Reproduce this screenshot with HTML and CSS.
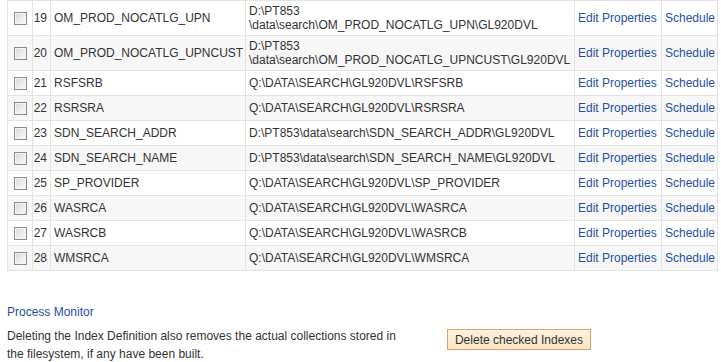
FILE: index.html
```html
<!DOCTYPE html>
<html>
<head>
<meta charset="utf-8">
<link rel="stylesheet" href="styles.css">
</head>
<body>
<table class="grid">
  <colgroup>
    <col class="c-chk"><col class="c-num"><col class="c-name"><col class="c-path"><col class="c-edit"><col class="c-sched">
  </colgroup>
  <tr><td><span class="chk"></span></td><td class="num">19</td><td>OM_PROD_NOCATLG_UPN</td><td>D:\PT853<br>\data\search\OM_PROD_NOCATLG_UPN\GL920DVL</td><td><a href="#">Edit Properties</a></td><td><a href="#">Schedule</a></td></tr>
  <tr class="alt"><td><span class="chk"></span></td><td class="num">20</td><td>OM_PROD_NOCATLG_UPNCUST</td><td>D:\PT853<br>\data\search\OM_PROD_NOCATLG_UPNCUST\GL920DVL</td><td><a href="#">Edit Properties</a></td><td><a href="#">Schedule</a></td></tr>
  <tr><td><span class="chk"></span></td><td class="num">21</td><td>RSFSRB</td><td>Q:\DATA\SEARCH\GL920DVL\RSFSRB</td><td><a href="#">Edit Properties</a></td><td><a href="#">Schedule</a></td></tr>
  <tr class="alt"><td><span class="chk"></span></td><td class="num">22</td><td>RSRSRA</td><td>Q:\DATA\SEARCH\GL920DVL\RSRSRA</td><td><a href="#">Edit Properties</a></td><td><a href="#">Schedule</a></td></tr>
  <tr><td><span class="chk"></span></td><td class="num">23</td><td>SDN_SEARCH_ADDR</td><td>D:\PT853\data\search\SDN_SEARCH_ADDR\GL920DVL</td><td><a href="#">Edit Properties</a></td><td><a href="#">Schedule</a></td></tr>
  <tr class="alt"><td><span class="chk"></span></td><td class="num">24</td><td>SDN_SEARCH_NAME</td><td>D:\PT853\data\search\SDN_SEARCH_NAME\GL920DVL</td><td><a href="#">Edit Properties</a></td><td><a href="#">Schedule</a></td></tr>
  <tr><td><span class="chk"></span></td><td class="num">25</td><td>SP_PROVIDER</td><td>Q:\DATA\SEARCH\GL920DVL\SP_PROVIDER</td><td><a href="#">Edit Properties</a></td><td><a href="#">Schedule</a></td></tr>
  <tr class="alt"><td><span class="chk"></span></td><td class="num">26</td><td>WASRCA</td><td>Q:\DATA\SEARCH\GL920DVL\WASRCA</td><td><a href="#">Edit Properties</a></td><td><a href="#">Schedule</a></td></tr>
  <tr><td><span class="chk"></span></td><td class="num">27</td><td>WASRCB</td><td>Q:\DATA\SEARCH\GL920DVL\WASRCB</td><td><a href="#">Edit Properties</a></td><td><a href="#">Schedule</a></td></tr>
  <tr class="alt"><td><span class="chk"></span></td><td class="num">28</td><td>WMSRCA</td><td>Q:\DATA\SEARCH\GL920DVL\WMSRCA</td><td><a href="#">Edit Properties</a></td><td><a href="#">Schedule</a></td></tr>
</table>
<div class="footer">
  <a href="#" class="pm">Process Monitor</a>
  <div class="delrow">
    <p class="note">Deleting the Index Definition also removes the actual collections stored in the filesystem, if any have been built.</p>
    <button class="btn" type="button">Delete checked Indexes</button>
  </div>
</div>
</body>
</html>
```

FILE: styles.css
```css
html, body {
  margin: 0;
  padding: 0;
  background: #ffffff;
}
body {
  padding: 0 7px;
  font-family: "Liberation Sans", Arial, sans-serif;
  font-size: 12px;
  color: #333333;
}
a {
  color: #1f4fa6;
  text-decoration: none;
}
.grid {
  border-collapse: collapse;
  table-layout: fixed;
  width: 710px;
}
.c-chk { width: 25px; }
.c-num { width: 18px; }
.c-name { width: 195px; }
.c-path { width: 329px; }
.c-edit { width: 87px; }
.c-sched { width: 56px; }
.grid td {
  border: 1px solid #e3e3e3;
  padding: 3px 2px 3px 3px;
  line-height: 14px;
  vertical-align: middle;
  white-space: nowrap;
  overflow: hidden;
}
.grid tr.alt td {
  background: #f7f7f7;
}
.grid td.num {
  text-align: right;
  padding: 3px 3px 3px 0;
}
.chk {
  display: block;
  box-sizing: border-box;
  width: 13px;
  height: 13px;
  margin: 3px auto 2px;
  border: 1px solid #8c8c8c;
  background: linear-gradient(135deg, #d6d6d6 0%, #ececec 55%, #fbfbfb 100%);
  box-shadow: inset 0 0 0 1px #f4f4f4;
}
.footer {
  padding-top: 32px;
}
.pm {
  display: block;
  line-height: 18px;
}
.delrow {
  display: flex;
  align-items: flex-start;
  margin-top: 6px;
}
.note {
  margin: 0;
  width: 400px;
  line-height: 18px;
}
.btn {
  margin: 2px 0 0 40px;
  box-sizing: border-box;
  width: 144px;
  height: 21px;
  padding: 0;
  border: 1px solid #d9a46c;
  border-radius: 0;
  background: linear-gradient(#fdf2e0, #fbe5c6);
  font-family: "Liberation Sans", Arial, sans-serif;
  font-size: 12px;
  color: #333333;
}
```
